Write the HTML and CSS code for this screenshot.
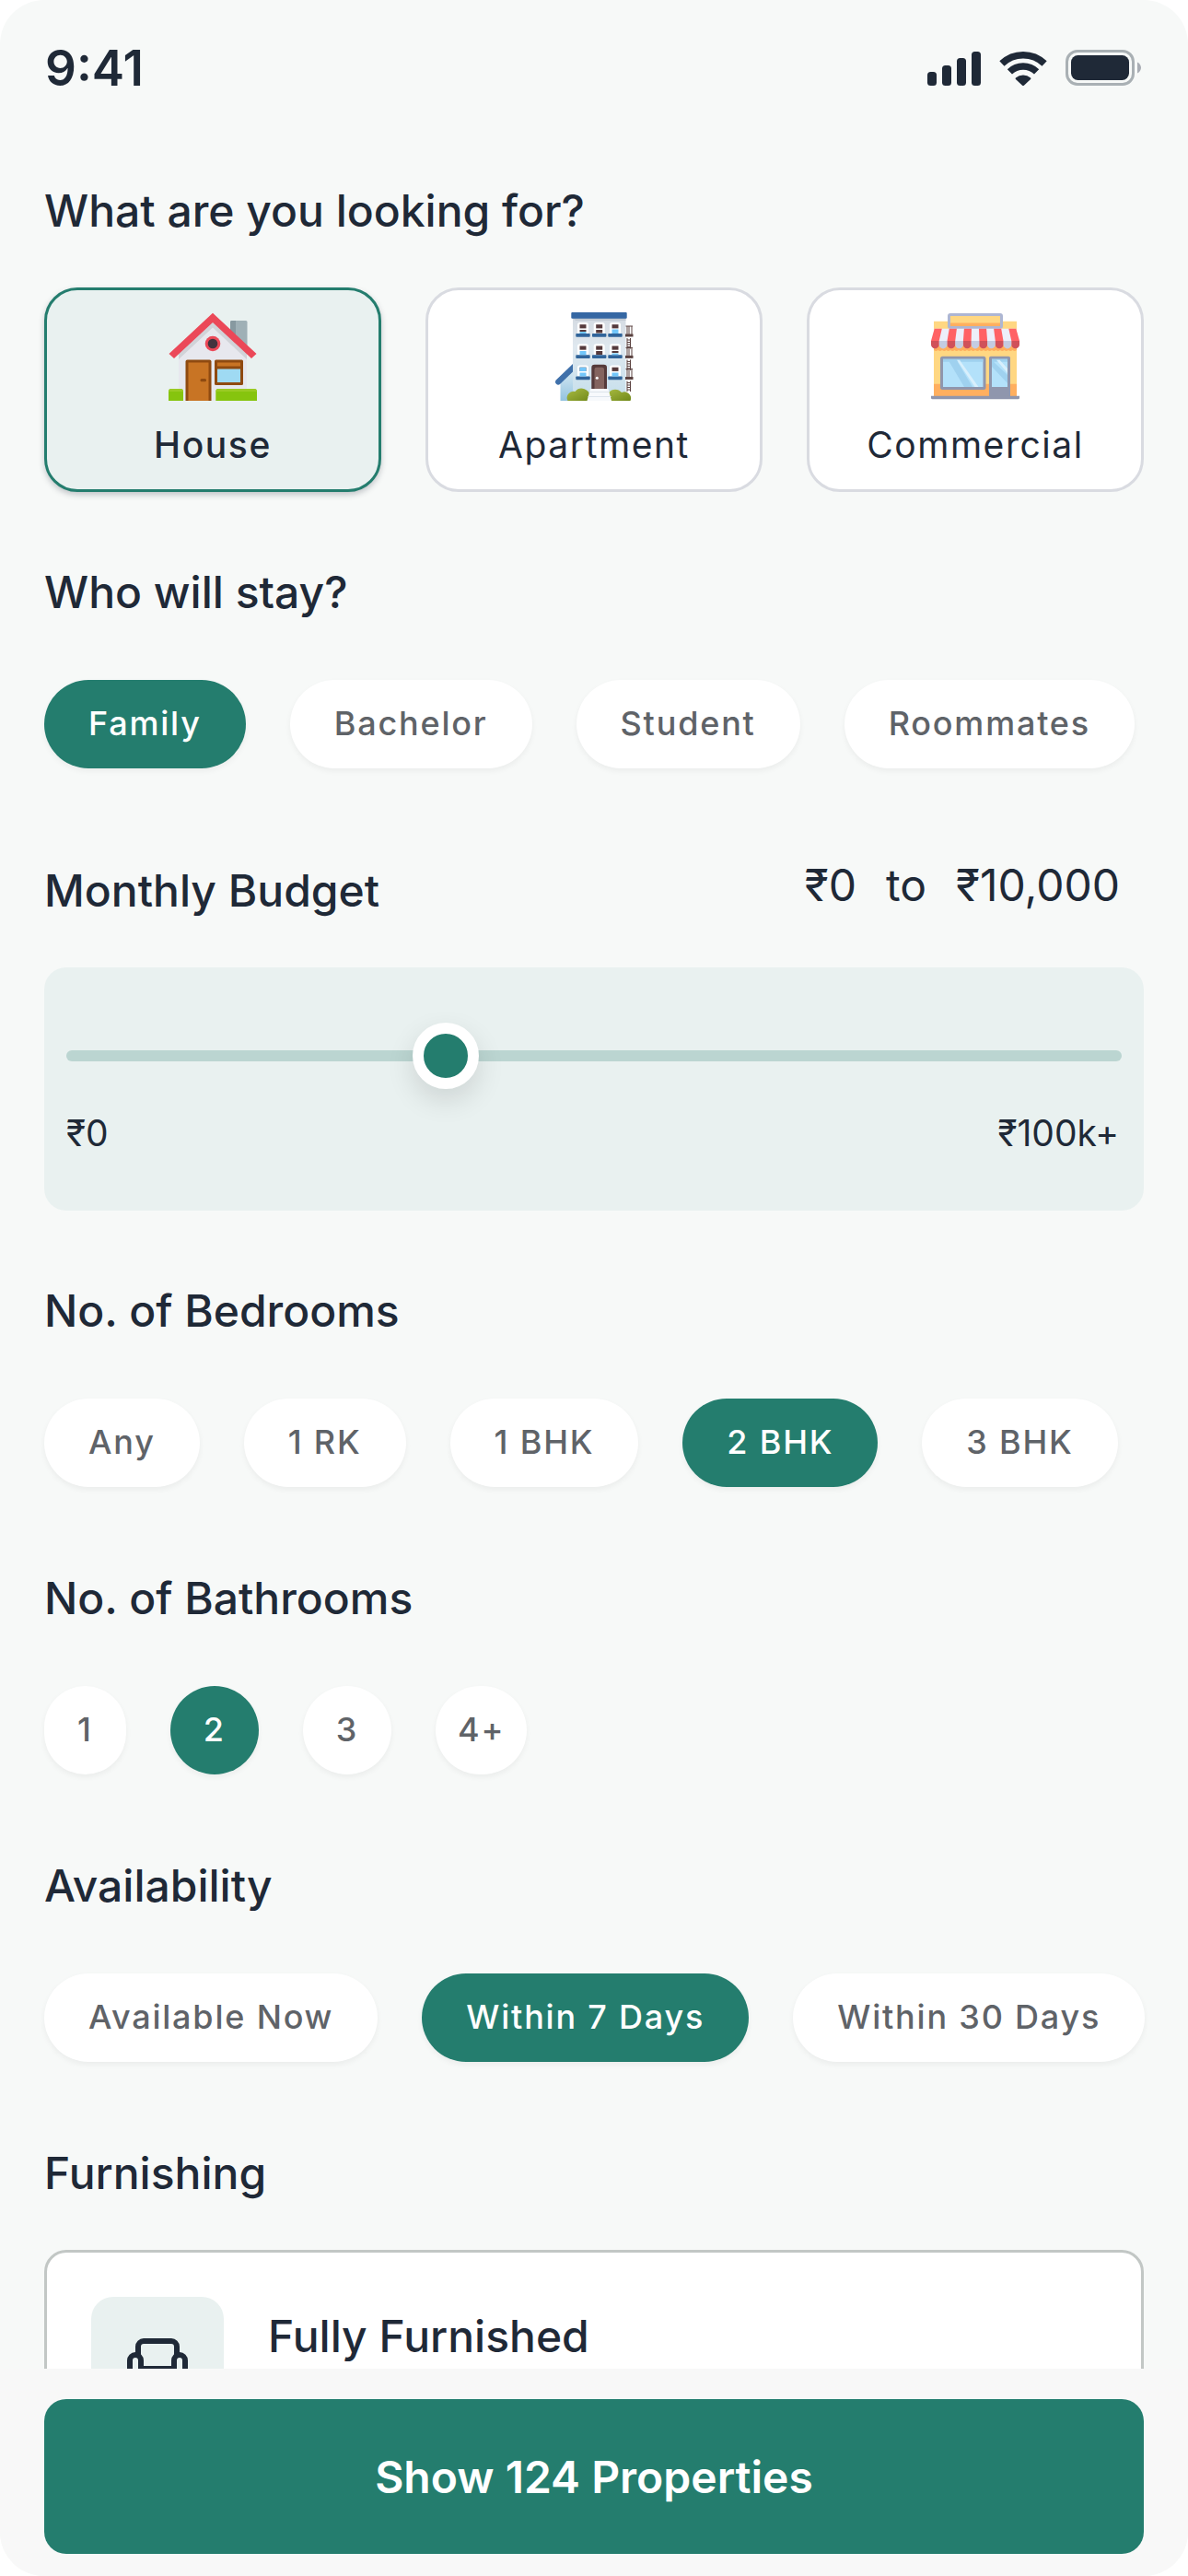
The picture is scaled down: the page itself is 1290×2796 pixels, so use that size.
FILE: index.html
```html
<!DOCTYPE html>
<html lang="en">
<head>
    <meta charset="UTF-8">
    <meta name="viewport" content="width=device-width, initial-scale=1.0">
    <title>Find a Property</title>
    <link rel="stylesheet" href="styles.css">
</head>
<body>

<form class="screen">

    <header class="status-bar">
        <span class="time">9:41</span>
        <div class="status-icons">
            <svg width="58" height="38" viewBox="0 0 58 38" fill="#1f2937">
                <rect x="0" y="23" width="10" height="15" rx="3.5"/>
                <rect x="16" y="16" width="10" height="22" rx="3.5"/>
                <rect x="32" y="8" width="10" height="30" rx="3.5"/>
                <rect x="48" y="1" width="10" height="37" rx="3.5"/>
            </svg>
            <svg width="52" height="38" viewBox="0 0 52 38" fill="none" stroke="#1f2937" stroke-width="7.5">
                <path d="M2.9 14a33.3 33.3 0 0 1 46.2 0"/>
                <path d="M11.4 22.9a21 21 0 0 1 29.2 0"/>
                <path d="M17.9 29.4a12.5 12.5 0 0 1 16.2 0q.7.8 0 1.5l-7.2 6.8q-.9.6-1.8 0l-7.2-6.8q-.7-.7 0-1.5z" fill="#1f2937" stroke="none"/>
            </svg>
            <svg width="82" height="40" viewBox="0 0 82 40">
                <rect x="1.5" y="1.5" width="72" height="36" rx="11.5" fill="none" stroke="#a9b0b4" stroke-width="3"/>
                <rect x="6" y="6" width="63" height="27" rx="7.5" fill="#1f2937"/>
                <path d="M78 13.5c2.4 1 4 3.5 4 6s-1.6 5-4 6z" fill="#a9adb4"/>
            </svg>
        </div>
    </header>

    <main class="filters">

        <section class="group">
            <h2 id="typeTitle">What are you looking for?</h2>
            <div class="types" role="radiogroup" aria-labelledby="typeTitle">
                <label class="type">
                    <input type="radio" name="type" value="house" checked>
                    <span class="type-card">
                        <svg class="type-icon" viewBox="0 0 96 96">
                            <rect x="67" y="9" width="18.5" height="36" rx="1.5" fill="#9fb0b6"/>
                            <path d="M68.5 9H73v27h-6V10.5q0-1.5 1.5-1.5z" fill="#8799a0"/>
                            <path d="M48 8l37 35v53H11V43z" fill="#e7e8ee"/>
                            <path d="M48 10l37 34v7L48 16.5 11 51v-7z" fill="#d1d3d8"/>
                            <path d="M48 .7L95.5 45 90 50 48 11 6 50 .5 45z" fill="#eb4858"/>
                            <circle cx="48" cy="34" r="8.3" fill="#eb4858"/>
                            <circle cx="48" cy="34" r="5.3" fill="#42333e"/>
                            <path d="M18.5 96V53.5q0-2 2-2h24q2 0 2 2V96z" fill="#8f4a10"/>
                            <path d="M21.5 54.5h22V96h-22z" fill="#c87424"/>
                            <rect x="34.5" y="72" width="6.5" height="3.2" rx="1.5" fill="#8f4a10"/>
                            <rect x="50" y="51.5" width="31" height="27.5" rx="1.5" fill="#8f4a10"/>
                            <path d="M53 54.5h25v4H53z" fill="#c87424"/>
                            <path d="M53 61.5h25V76H53z" fill="#9fdaf3"/>
                            <path d="M0 96V86q0-3 3-3h10q3 0 3 3v10zM51.3 96V86q0-3 3-3H93q3 0 3 3v10z" fill="#86c40e"/>
                            <path d="M0 86q0-3 3-3h10q3 0 3 3zM51.3 86q0-3 3-3H93q3 0 3 3z" fill="#9acb24"/>
                        </svg>
                        House
                    </span>
                </label>
                <label class="type">
                    <input type="radio" name="type" value="apartment">
                    <span class="type-card">
                        <svg class="type-icon" viewBox="0 0 96 96">
                            <defs>
                                <linearGradient id="wall" x1="0" y1="0" x2="0" y2="1">
                                    <stop offset="0" stop-color="#d5dbe2"/>
                                    <stop offset=".35" stop-color="#dfe8ef"/>
                                    <stop offset="1" stop-color="#c5dfec"/>
                                </linearGradient>
                                <linearGradient id="wing" x1="0" y1="0" x2="0" y2="1">
                                    <stop offset="0" stop-color="#dcecf5"/>
                                    <stop offset="1" stop-color="#93c3df"/>
                                </linearGradient>
                                <linearGradient id="bush" x1="0" y1="0" x2="1" y2="1">
                                    <stop offset="0" stop-color="#a9bb42"/>
                                    <stop offset="1" stop-color="#71891a"/>
                                </linearGradient>
                                <!-- window frame and sill, panes are added per window -->
                                <g id="frame">
                                    <path d="M-6 12.5V3Q-6 .5-3.5.5h7Q6 .5 6 3v9.5z" fill="#fff"/>
                                    <path d="M-3.5 2.7h7v4.2h-7z" fill="#553a3c"/>
                                    <rect x="-7.7" y="12.5" width="15.4" height="3.8" rx=".8" fill="#30649a"/>
                                </g>
                                <g id="escape" fill="none" stroke="#5b4240">
                                    <path d="M82.5 15H90M84 15v9M86 15v9M89 15v9M84 28v11.5M87.5 28v11.5M84 30h3.5M84 32.5h3.5M84 35h3.5M84 37.5h3.5" stroke-width="1"/>
                                    <path d="M82 25h8.5" stroke-width="3"/>
                                </g>
                            </defs>
                            <path d="M11.5 96V75L25 60v36z" fill="url(#wing)"/>
                            <path d="M25 56v8.5L11 78q-2 1.500-4-.3t-.5-4z" fill="#3f70aa"/>
                            <path d="M25 6h57.500v90H25z" fill="url(#wall)"/>
                            <path d="M25 6h57.500v3H28z" fill="#c2cad3"/>
                            <rect x="23.3" y="0" width="60.4" height="6.8" rx="1" fill="#3567a3"/>
                            <use href="#frame" x="36" y="10.5"/>
                            <use href="#frame" x="53.7" y="10.5"/>
                            <use href="#frame" x="71" y="10.5"/>
                            <use href="#frame" x="36" y="33.8"/>
                            <use href="#frame" x="53.7" y="33.8"/>
                            <use href="#frame" x="71" y="33.8"/>
                            <use href="#frame" x="36" y="57"/>
                            <use href="#frame" x="71" y="57"/>
                            <path d="M32.5 19h7v2h-7zM50.2 19h7v3.500h-7zM50.2 42h7v4h-7zM67.5 42h7v2h-7z" fill="#553a3c"/>
                            <path d="M32.5 21h7v2h-7zM67.5 18.5h7V23h-7zM32.5 42h7v4.3h-7zM67.5 44.5h7v1.800h-7zM32.5 59.7h7V64h-7zM32.5 65.5h7v4h-7zM67.5 65.5h7v4h-7z" fill="#72c6fa"/>
                            <path d="M45.3 83V60q0-3.3 3.3-3.3h10.1q3.3 0 3.3 3.3v23z" fill="#553a3a"/>
                            <path d="M48.5 83V62q0-2.3 2.3-2.3h6Q59 59.7 59 62v21z" fill="#84645f"/>
                            <circle cx="51.3" cy="71.3" r="1.5" fill="#fff"/>
                            <use href="#escape"/>
                            <use href="#escape" y="23.4"/>
                            <use href="#escape" y="46.5"/>
                            <path d="M19.5 96a7 7 0 0 1 8-10 9 9 0 0 1 16 6v4z" fill="url(#bush)"/>
                            <path d="M61 96l3-9a9 9 0 0 1 14 0 7 7 0 0 1 9.500 9z" fill="url(#bush)"/>
                            <path d="M44 83h19.500L67 96H40.500z" fill="#f7f9fc"/>
                            <path d="M43 86.500h21.500M41.500 91.500h25" stroke="#dde4ec" stroke-width="1"/>
                        </svg>
                        Apartment
                    </span>
                </label>
                <label class="type">
                    <input type="radio" name="type" value="commercial">
                    <span class="type-card">
                        <svg class="type-icon" viewBox="0 0 96 96">
                            <path d="M3 9.7h90V92H3z" fill="#ffd782"/>
                            <path d="M3 77.7h90V92H3zM3 36h90v5q-2.300 2-4.500 0-2.200 2-4.500 0-2.300 2-4.500 0-2.200 2-4.500 0-2.300 2-4.500 0-2.200 2-4.500 0-2.300 2-4.500 0-2.200 2-4.500 0-2.300 2-4.500 0-2.200 2-4.500 0-2.300 2-4.500 0-2.200 2-4.500 0-2.300 2-4.500 0-2.200 2-4.500 0-2.300 2-4.500 0-2.200 2-4.500 0-2.300 2-4.500 0-2.200 2-4.500 0-2.300 2-4.500 0-2.200 2-4.500 0z" fill="#ffaf5f"/>
                            <rect x="19.5" y="2.5" width="57" height="14" rx="1.5" fill="#ffd782" stroke="#adb6d3" stroke-width="3"/>
                            <path d="M21 11.5h54V15H21z" fill="#ffaf5f"/>
                            <path d="M3.7 17.7h88.600L96 31v4H0v-4z" fill="#edeffa"/>
                            <path d="M3.7 17.7h8.100L8.700 31H0zM19.800 17.700h8.100L26.200 31h-8.700zM35.900 17.700H44L43.600 31h-8.700zM52 17.700h8.100l1 13.300h-8.700zM68.100 17.700h8.100l2.300 13.300h-8.700zM84.300 17.700h8L96 31h-8.700z" fill="#ff6265"/>
                            <path d="M8.700 31h8.800v4a4.400 4.400 0 0 1-8.800 0zM26.200 31h8.700v4a4.350 4.350 0 0 1-8.700 0zM43.600 31h8.800v4a4.400 4.400 0 0 1-8.800 0zM61.100 31h8.700v4a4.350 4.350 0 0 1-8.700 0zM78.500 31h8.800v4a4.400 4.400 0 0 1-8.800 0z" fill="#c4cce2"/>
                            <path d="M0 31h8.700v4A4.350 4.350 0 0 1 0 35zM17.500 31h8.700v4a4.350 4.350 0 0 1-8.700 0zM34.900 31h8.700v4a4.350 4.350 0 0 1-8.700 0zM52.400 31h8.700v4a4.350 4.350 0 0 1-8.700 0zM69.800 31h8.700v4a4.350 4.350 0 0 1-8.700 0zM87.300 31H96v4a4.350 4.350 0 0 1-8.700 0z" fill="#d0515a"/>
                            <rect x="11.5" y="49.2" width="46.5" height="33.3" rx="1" fill="#b3e1fa" stroke="#8f96ad" stroke-width="3"/>
                            <path d="M13 50.7h43.500v3H13zM18 50.7h9L45 81h-9z" fill="#9fd1ef"/>
                            <path d="M28 51.7h3L51.500 81h-4z" fill="#d8effc"/>
                            <path d="M63 92V49.500q0-1.800 1.800-1.800h19.400q1.800 0 1.800 1.800V92z" fill="#8f96ad"/>
                            <path d="M66 50.7h17V81H66z" fill="#b3e1fa"/>
                            <path d="M66 50.7h17v3H66zM66 52l17 16v9L66 59z" fill="#9fd1ef"/>
                            <path d="M71 51.7h3.500L83 61v5z" fill="#d8effc"/>
                            <path d="M0 90.7h96v2q0 1.500-1.500 1.500h-93Q0 94.200 0 92.700z" fill="#8f96ad"/>
                        </svg>
                        Commercial
                    </span>
                </label>
            </div>
        </section>

        <section class="group">
            <h2 id="stayTitle">Who will stay?</h2>
            <div class="chips" role="radiogroup" aria-labelledby="stayTitle">
                <label class="chip"><input type="radio" name="stay" checked><span>Family</span></label>
                <label class="chip"><input type="radio" name="stay"><span>Bachelor</span></label>
                <label class="chip"><input type="radio" name="stay"><span>Student</span></label>
                <label class="chip"><input type="radio" name="stay"><span>Roommates</span></label>
            </div>
        </section>

        <section class="group">
            <div class="budget-head">
                <h2 id="budgetTitle">Monthly Budget</h2>
                <div class="budget-values">
                    <span>₹0</span>
                    <span>to</span>
                    <span>₹10,000</span>
                </div>
            </div>
            <div class="budget">
                <input class="slider" type="range" min="0" max="100" value="35" aria-labelledby="budgetTitle">
                <div class="budget-scale">
                    <span>₹0</span>
                    <span>₹100k+</span>
                </div>
            </div>
        </section>

        <section class="group">
            <h2 id="bedTitle">No. of Bedrooms</h2>
            <div class="chips" role="radiogroup" aria-labelledby="bedTitle">
                <label class="chip"><input type="radio" name="bed"><span>Any</span></label>
                <label class="chip"><input type="radio" name="bed"><span>1 RK</span></label>
                <label class="chip"><input type="radio" name="bed"><span>1 BHK</span></label>
                <label class="chip"><input type="radio" name="bed" checked><span>2 BHK</span></label>
                <label class="chip"><input type="radio" name="bed"><span>3 BHK</span></label>
            </div>
        </section>

        <section class="group">
            <h2 id="bathTitle">No. of Bathrooms</h2>
            <div class="chips round" role="radiogroup" aria-labelledby="bathTitle">
                <label class="chip"><input type="radio" name="bath"><span>1</span></label>
                <label class="chip"><input type="radio" name="bath" checked><span>2</span></label>
                <label class="chip"><input type="radio" name="bath"><span>3</span></label>
                <label class="chip wide"><input type="radio" name="bath"><span>4+</span></label>
            </div>
        </section>

        <section class="group">
            <h2 id="availTitle">Availability</h2>
            <div class="chips" role="radiogroup" aria-labelledby="availTitle">
                <label class="chip"><input type="radio" name="avail"><span>Available Now</span></label>
                <label class="chip"><input type="radio" name="avail" checked><span>Within 7 Days</span></label>
                <label class="chip"><input type="radio" name="avail"><span>Within 30 Days</span></label>
            </div>
        </section>

        <section class="group">
            <h2>Furnishing</h2>
            <div class="furnish">
                <div class="furnish-icon">
                    <svg width="72" height="72" viewBox="0 0 24 24" fill="none" stroke="#1f2937" stroke-width="2" stroke-linecap="round" stroke-linejoin="round">
                        <path d="M19 9V6a2 2 0 0 0-2-2H7a2 2 0 0 0-2 2v3"/>
                        <path d="M2 16a2 2 0 0 0 2 2h16a2 2 0 0 0 2-2v-5a2 2 0 0 0-4 0v3H6v-3a2 2 0 0 0-4 0z"/>
                        <path d="M4 18v2M20 18v2"/>
                    </svg>
                </div>
                <h3>Fully Furnished</h3>
            </div>
        </section>

    </main>

    <footer class="bottom-bar">
        <button type="submit">Show 124 Properties</button>
    </footer>

</form>

</body>
</html>
```
FILE: styles.css
```css
* {
    box-sizing: border-box;
}
body {
    margin: 0;
    background: #fff;
    color: #1f2937;
    font-family: Inter, "Noto Sans", sans-serif;
}
.screen {
    display: flex;
    flex-direction: column;
    height: 100vh;
    overflow: hidden;
    background: #f7f9f8;
    border-radius: 48px;
}

/* status bar */
.status-bar {
    display: flex;
    flex: none;
    justify-content: space-between;
    align-items: center;
    height: 144px;
    padding: 4px 51px 0 49px;
}
.time {
    font-size: 53px;
    font-weight: 600;
}
.status-icons {
    display: flex;
    align-items: center;
    gap: 20px;
}

/* filter groups */
.filters {
    display: flex;
    flex: 1;
    flex-direction: column;
    gap: 72px;
    min-height: 0;
    overflow: hidden;
    padding: 48px 48px 0;
}
.group {
    flex: none;
}
h2,
h3 {
    margin: 0;
    font-size: 48px;
    font-weight: 500;
    line-height: 74px;
}
input[type="radio"] {
    position: absolute;
    opacity: 0;
}

.types {
    display: grid;
    grid-template-columns: repeat(3, 1fr);
    gap: 48px;
    margin-top: 46px;
}
.type-card {
    display: flex;
    flex-direction: column;
    align-items: center;
    gap: 24px;
    padding: 24px;
    background: #fff;
    border: 3px solid #d9dbe1;
    border-radius: 36px;
    font-size: 39px;
    line-height: 48px;
    letter-spacing: 0.04em;
}
.type-icon {
    width: 96px;
    height: 96px;
}
.type input:checked + .type-card {
    background: #e9f1f0;
    border-color: #247d6e;
    box-shadow: 0 3px 6px rgba(31, 41, 55, 0.25);
    font-weight: 500;
}

.chips {
    display: flex;
    gap: 48px;
    padding: 58px 0 12px;
}
.chip span {
    display: block;
    padding: 0 48px 2px;
    background: #fff;
    border-radius: 48px;
    box-shadow: 0 3px 6px rgba(0, 0, 0, 0.05);
    color: #5f6368;
    font-size: 36px;
    font-weight: 500;
    line-height: 94px;
    letter-spacing: 0.05em;
    white-space: nowrap;
}
.chip input:checked + span {
    background: #247d6e;
    color: #fff;
}
.round .chip span {
    padding: 0 36px 2px;
}
.round .wide span {
    padding: 0 24px 2px;
}

/* budget */
.budget-head {
    display: flex;
    justify-content: space-between;
    align-items: flex-end;
}
.budget-values {
    display: flex;
    gap: 32px;
    padding-right: 26px;
    font-size: 48px;
    line-height: 86px;
}
.budget {
    margin-top: 46px;
    padding: 60px 24px;
    background: #e9f1f0;
    border-radius: 24px;
}
.budget-scale {
    display: flex;
    justify-content: space-between;
    margin-top: 24px;
    padding-right: 3px;
    font-size: 39px;
    line-height: 48px;
}
.slider {
    display: block;
    width: 100%;
    height: 72px;
    margin: 0;
    background: none;
    appearance: none;
}
.slider::-webkit-slider-runnable-track {
    height: 12px;
    background: #bbd5d1;
    border-radius: 6px;
}
.slider::-webkit-slider-thumb {
    width: 72px;
    height: 72px;
    margin-top: -30px;
    background: #247d6e;
    border: 12px solid #fff;
    border-radius: 50%;
    box-shadow: 0 12px 30px rgba(0, 0, 0, 0.12);
    appearance: none;
}

/* furnishing */
.furnish {
    display: flex;
    gap: 48px;
    margin-top: 46px;
    padding: 48px;
    background: #fff;
    border: 3px solid #c2c7c5;
    border-radius: 24px;
}
.furnish-icon {
    display: flex;
    justify-content: center;
    align-items: center;
    width: 144px;
    height: 144px;
    background: #e9f1f0;
    border-radius: 24px;
}
.furnish h3 {
    padding-top: 6px;
}

.bottom-bar {
    flex: none;
    padding: 33px 48px 24px;
    background: #f8f8f8;
}
.bottom-bar button {
    display: block;
    width: 100%;
    height: 168px;
    background: #247d6e;
    border: none;
    border-radius: 24px;
    color: #fff;
    font-family: inherit;
    font-size: 48px;
    font-weight: 600;
    cursor: pointer;
}
```
